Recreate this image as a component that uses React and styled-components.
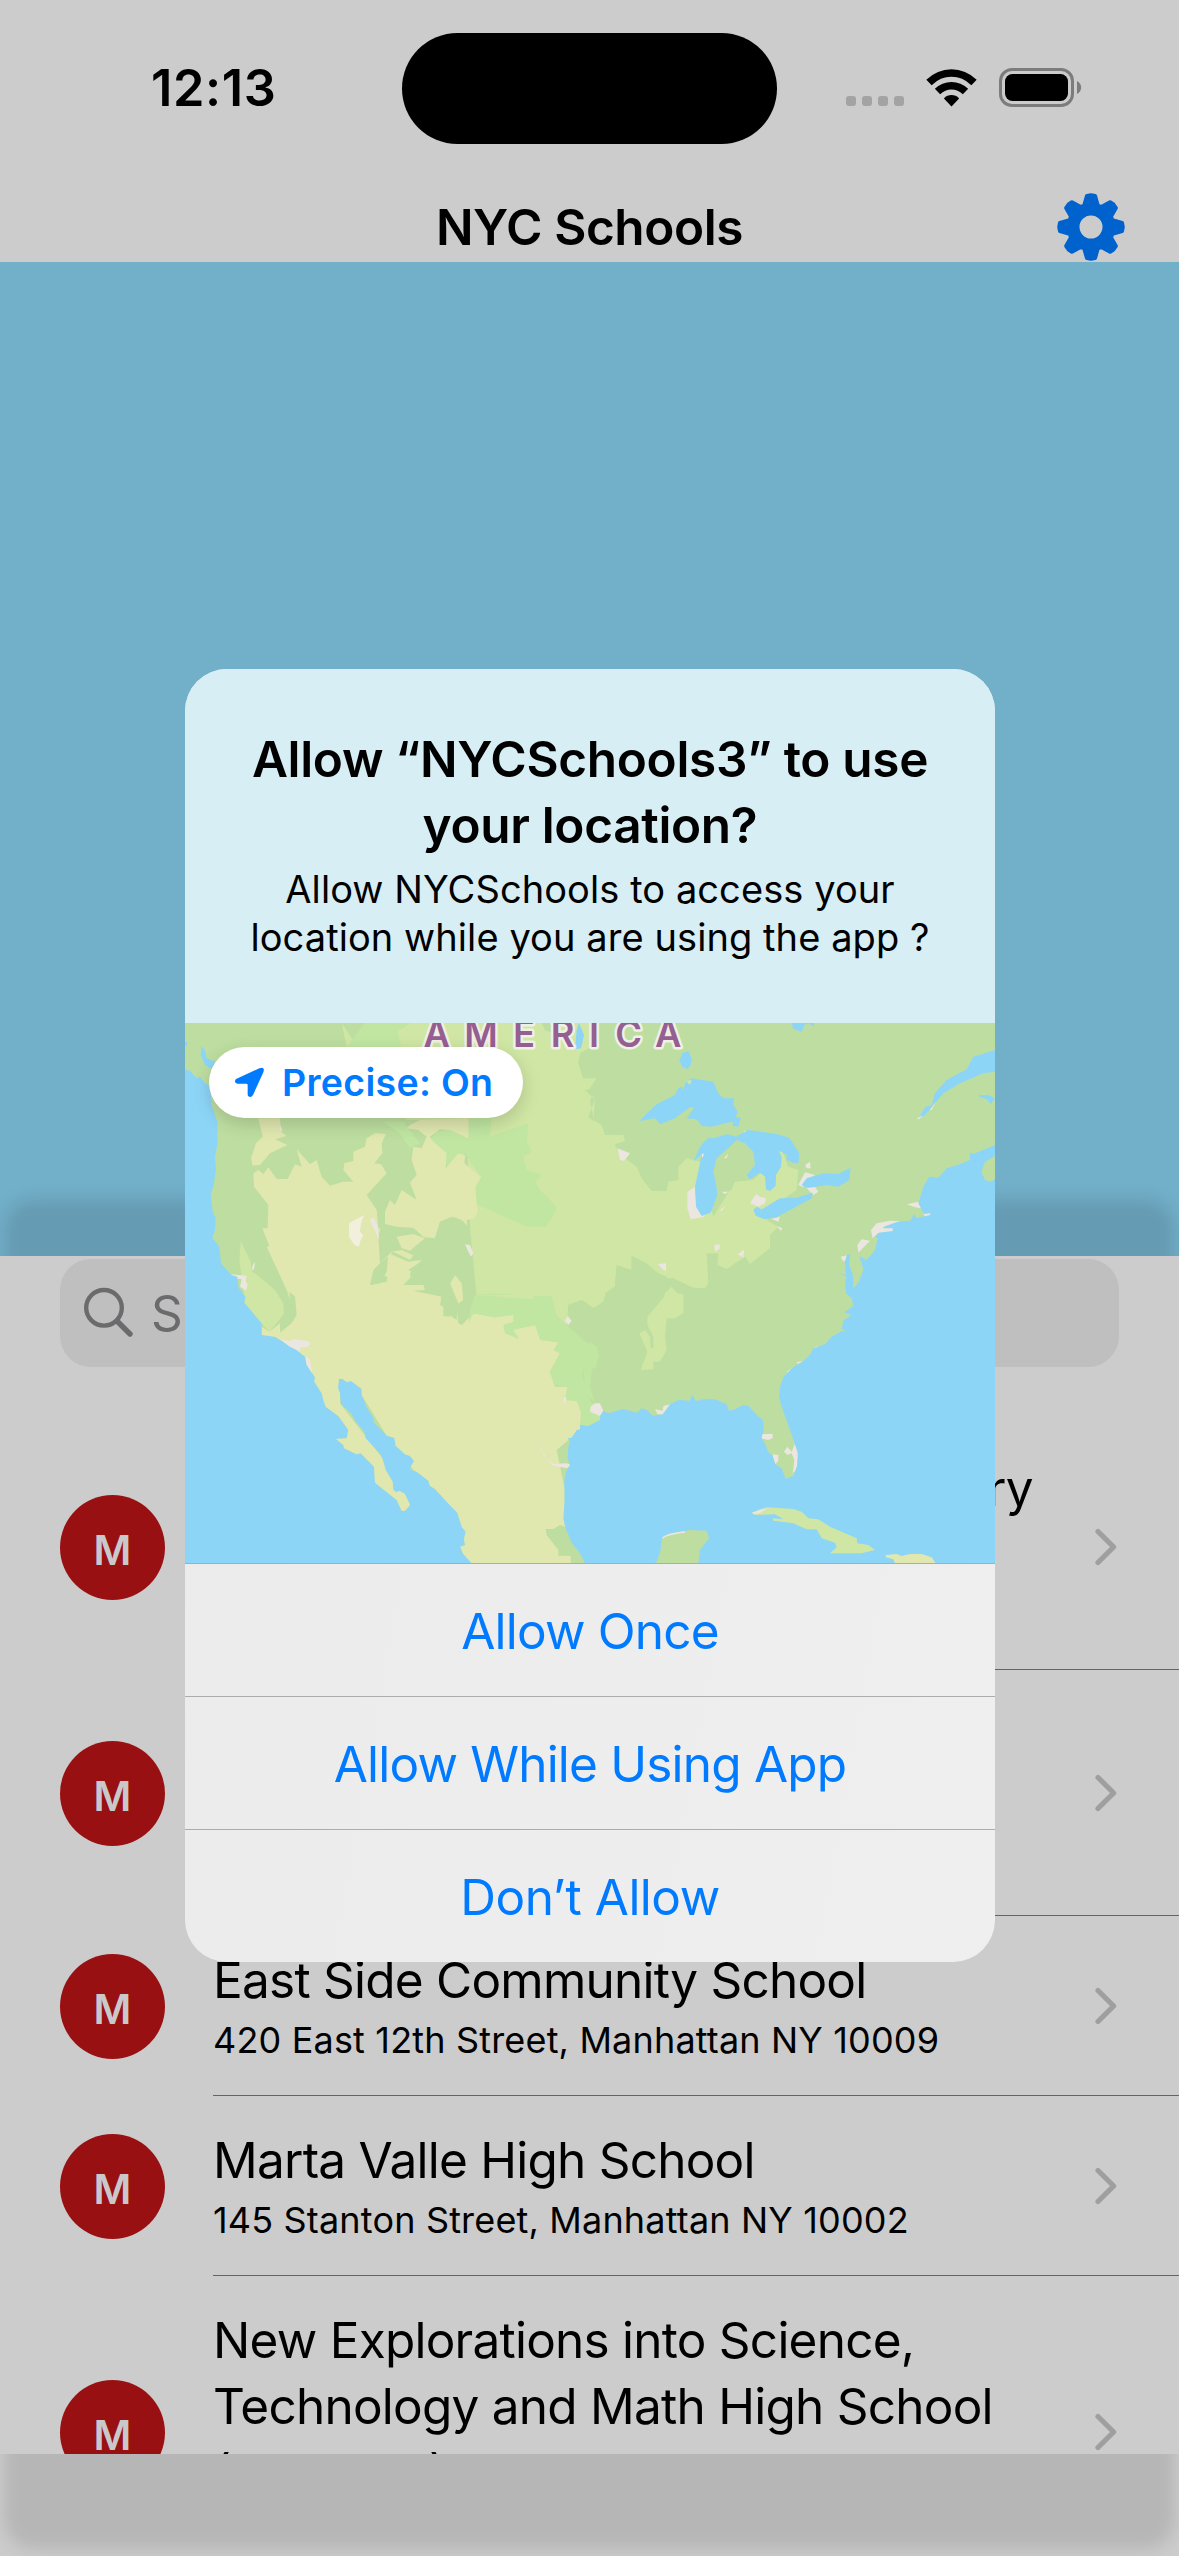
import React from "react";
import styled, { createGlobalStyle } from "styled-components";

const GlobalStyle = createGlobalStyle`
  html, body { margin: 0; padding: 0; background: #ccc; }
  body { font-family: Inter, "Liberation Sans", sans-serif; color: #000; }
  * { box-sizing: border-box; }
  button { font: inherit; border: 0; background: none; padding: 0; margin: 0; }
`;

const Screen = styled.main`
  position: relative;
  width: 1179px;
  height: 2556px;
  overflow: hidden;
  background: #ccc;
  display: flex;
  flex-direction: column;
  isolation: isolate;
`;

const StatusBar = styled.header`
  height: 177px;
  flex: none;
  display: grid;
  grid-template-columns: 402px 375px 402px;
  align-items: start;
  padding-top: 33px;
`;

const Clock = styled.time`
  padding-left: 151px;
  margin-top: 25px;
  font-size: 50.5px;
  line-height: 60px;
  font-weight: 600;
  letter-spacing: 0.6px;
`;

const Island = styled.div`
  height: 111px;
  border-radius: 56px;
  background: #000;
`;

const StatusIcons = styled.div`
  display: flex;
  padding-left: 68px;
  margin-top: 34px;
`;

const NavBar = styled.nav`
  height: 85px;
  flex: none;
  display: grid;
  grid-template-columns: 1fr auto 1fr;
  align-items: start;
`;

const NavTitle = styled.h1`
  grid-column: 2;
  margin: 0;
  padding-top: 20px;
  font-size: 49.5px;
  line-height: 60px;
  font-weight: 600;
  letter-spacing: ${(p) => p.$track}px;
`;

const GearButton = styled.button`
  justify-self: end;
  display: block;
  width: 68px;
  height: 68px;
  margin: 16px 54px 0 0;
  svg { display: block; }
`;

const MapBackdrop = styled.section`
  height: 994px;
  flex: none;
  background: #72afc9;
`;

const Sheet = styled.section`
  position: relative;
  height: 1198px;
  flex: none;

  &::before {
    content: "";
    position: absolute;
    inset: -57px 4px -95px 4px;
    border-radius: 30px;
    background: rgba(0, 0, 0, 0.105);
    filter: blur(8px);
  }
`;

const SheetBody = styled.div`
  position: relative;
  height: 100%;
  overflow: hidden;
  background: #ccc;
  padding-top: 3px;
`;

const SearchField = styled.div`
  margin: 0 60px 57px;
  height: 108px;
  border-radius: 31px;
  background: #bfbfbf;
  display: flex;
  align-items: center;
  padding-left: 22px;
  font-size: 49.5px;
  color: #6b6b6d;
  svg { flex: none; margin-right: 17px; }
`;

const Row = styled.article`
  display: grid;
  grid-template-columns: 105px 1fr;
  column-gap: 48px;
  align-items: stretch;
  padding-left: 60px;
`;

const Avatar = styled.div`
  align-self: center;
  width: 105px;
  height: 105px;
  border-radius: 50%;
  background: #991012;
  color: #c9c9cb;
  font-size: 41px;
  font-weight: 600;
  line-height: 111px;
  text-align: center;
`;

const RowContent = styled.div`
  display: flex;
  align-items: center;
  padding: 33px 62px 32px 0;
  border-bottom: 1px solid #646466;
`;

const RowText = styled.div`
  flex: 1;
  white-space: nowrap;
`;

const School = styled.div`
  height: 66px;
  font-size: 49.5px;
  line-height: 63px;
  letter-spacing: ${(p) => p.$track || 0}px;
`;

const Address = styled.div`
  height: 48px;
  font-size: 36px;
  line-height: 50px;
  letter-spacing: ${(p) => p.$track || 0}px;
`;

const Alert = styled.div`
  position: absolute;
  left: 185px;
  top: 669px;
  width: 810px;
  height: 1293px;
  border-radius: 42px;
  overflow: hidden;
  background: linear-gradient(100deg, #ebebeb, #efefef);
  display: flex;
  flex-direction: column;
`;

const AlertHeader = styled.div`
  height: 354px;
  flex: none;
  background: #d7eef5;
  padding-top: 57px;
  text-align: center;
`;

const AlertTitle = styled.h2`
  margin: 0;
  font-size: 49.5px;
  line-height: 66px;
  font-weight: 600;
`;

const Message = styled.p`
  margin: 7px 0 0;
  font-size: 38px;
  line-height: 48px;
`;

const Line = styled.span`
  display: block;
  white-space: nowrap;
  letter-spacing: ${(p) => p.$track || 0}px;
`;

const MapPreview = styled.div`
  position: relative;
  height: 540px;
  flex: none;
  > svg { display: block; }
`;

const PrecisePill = styled.div`
  position: absolute;
  left: 24px;
  top: 24px;
  width: 314px;
  height: 71px;
  border-radius: 36px;
  background: #fff;
  box-shadow: 0 6px 18px rgba(0, 0, 0, 0.16);
  color: #007aff;
  display: flex;
  align-items: center;
  padding-left: 25px;
  font-size: 37.5px;
  font-weight: 600;
  white-space: nowrap;
  letter-spacing: ${(p) => p.$track}px;
  svg { flex: none; margin-right: 17px; }
`;

const AlertButton = styled.button`
  flex: none;
  height: 133px;
  border-top: 1px solid #acacae;
  color: #007aff;
  font-size: 49.5px;
  line-height: 134px;
  text-align: center;
  letter-spacing: ${(p) => p.$track || 0}px;
`;

function gearPath(cx, cy) {
  const pts = [];
  const add = (deg, r) => {
    const a = (deg * Math.PI) / 180;
    pts.push(`${(cx + r * Math.sin(a)).toFixed(2)} ${(cy - r * Math.cos(a)).toFixed(2)}`);
  };
  for (let i = 0; i < 8; i++) {
    const c = i * 45;
    add(c - 17.5, 22.5);
    add(c - 7.5, 31.3);
    add(c, 31.8);
    add(c + 7.5, 31.3);
    add(c + 17.5, 22.5);
  }
  return `M${pts.join("L")}Z`;
}

const Gear = () => (
  <svg width="68" height="68" viewBox="0 0 68 68">
    <path
      fillRule="evenodd"
      fill="#0062cc"
      stroke="#0062cc"
      strokeWidth="4"
      strokeLinejoin="round"
      d={`${gearPath(34, 34)}M34 20.5a13.5 13.5 0 1 0 0 27a13.5 13.5 0 1 0 0 -27Z`}
    />
  </svg>
);

const StatusGlyphs = () => (
  <svg width="240" height="42" viewBox="845 67 240 42">
    <g fill="#a3a3a3">
      {[846, 862, 878, 894].map((x) => (
        <rect key={x} x={x} y="96" width="10" height="10" rx="3" />
      ))}
    </g>
    <g fill="none" stroke="#000" strokeWidth="7.6">
      <path d="M929 82.5C942 69.8 961 69.8 974 82.5" />
      <path d="M937.5 91.5C945.5 83.8 957.5 83.8 965.5 91.5" />
    </g>
    <path d="M951.5 106.5L943.9 98.4C948 94 955 94 959.1 98.4Z" />
    <rect x="1000.5" y="69.5" width="72" height="36" rx="11.5" fill="none" stroke="#7c7c7c" strokeWidth="3" />
    <rect x="1005" y="74" width="63" height="27" rx="7.5" />
    <path d="M1077 81C1082.5 83.5 1082.5 91.5 1077 94Z" fill="#7c7c7c" />
  </svg>
);

const SearchIcon = () => (
  <svg width="52" height="52" viewBox="82 1287 52 52" fill="none" stroke="#6b6b6d">
    <circle cx="104" cy="1307.8" r="17.8" strokeWidth="4.4" />
    <path d="M117.5 1321.5L130 1334" strokeWidth="5.4" strokeLinecap="round" />
  </svg>
);

const Chevron = () => (
  <svg width="22" height="38" viewBox="0 0 22 38" fill="none" stroke="#9f9fa0" strokeWidth="5.2" strokeLinecap="round" strokeLinejoin="round">
    <path d="M3 3.5L18.6 19L3 34.5" />
  </svg>
);

const LocationArrow = () => (
  <svg width="31" height="31" viewBox="162 172 93 93">
    <path fill="#007aff" d="M168 208L238 176Q256 170 250 188L219 256Q213 265 205 260Q203 258 203 253L203 226Q203 222 199 222L172 222Q160 219 168 208Z" />
  </svg>
);

const land =
  "M15 39L2445 39L2445 405L2380 432L2370 428L2370 450L2340 463L2300 475L2275 503L2247 500L2230 530L2215 580L2235 618L2210 625L2203 613L2190 632L2135 637L2110 655L2085 680L2093 685L2085 720L2060 750L2038 738L2050 778L2037 815L2020 835L2020 800L2008 765L2010 732L2000 735L1995 755L1998 795L1977 790L2000 800L1995 815L1998 850L2015 865L2020 888L1993 907L2013 915L1990 932L1985 957L1998 962L1985 963L1955 980L1935 1003L1900 1015L1890 1035L1870 1053L1835 1075L1810 1102L1800 1130L1797 1160L1805 1190L1827 1252L1837 1280L1853 1328L1852 1365L1840 1398L1817 1406L1805 1375L1786 1363L1777 1335L1765 1327L1757 1305L1744 1283L1751 1265L1750 1232L1730 1215L1705 1187L1690 1185L1665 1198L1647 1202L1640 1183L1605 1168L1570 1168L1548 1173L1537 1155L1530 1172L1495 1170L1470 1183L1448 1213L1418 1217L1400 1200L1385 1195L1370 1208L1330 1197L1285 1210L1270 1203L1260 1218L1260 1230L1225 1248L1200 1245L1200 1258L1190 1260L1175 1283L1163 1285L1170 1295L1165 1310L1163 1345L1170 1365L1160 1380L1153 1410L1153 1480L1150 1525L1155 1550L1175 1598L1200 1630L1215 1660L875 1660L848 1630L841 1610L855 1605L852 1588L857 1565L845 1550L832 1508L800 1475L765 1437L750 1428L745 1412L710 1385L692 1380L692 1370L702 1353L690 1338L675 1333L647 1307L643 1283L620 1277L583 1238L578 1220L560 1192L545 1155L545 1137L513 1113L500 1117L487 1107L477 1107L474 1135L480 1150L483 1183L515 1212L525 1232L553 1265L557 1285L605 1337L617 1380L638 1415L640 1440L650 1447L658 1442L675 1452L690 1485L675 1502L665 1502L650 1470L585 1418L582 1370L542 1330L530 1333L492 1315L490 1305L468 1287L500 1285L505 1260L475 1218L437 1190L430 1170L425 1150L403 1115L405 1102L380 1065L375 1040L350 1020L330 1010L305 992L285 980L245 975L245 940L193 878L197 860L175 832L172 800L155 795L145 785L123 760L118 710L97 683L105 660L107 625L97 600L92 552L100 530L108 480L105 440L113 400L112 335L95 285L90 228L75 220L60 200L50 205L30 183L15 178Z";

const NorthAmerica = () => (
  <svg width="810" height="540" viewBox="15 39 2430 1620">
    <clipPath id="land"><path d={land} /></clipPath>
    <rect x="15" y="39" width="2430" height="1620" fill="#8dd5f7" />
    <path d={land} fill="#bddea0" />
    <g clipPath="url(#land)">
      {/* prairies and midwest */}
      <path fill="#cfe6a4" d="M485 39L500 112L690 112L1030 230L1195 39L1230 39L1235 110L1200 130L1195 160L1210 205L1250 205L1230 235L1245 270L1240 330L1265 345L1275 375L1330 375L1335 393L1305 403L1315 430L1370 470L1385 505L1415 543L1460 543L1465 515L1495 510L1495 470L1520 445L1560 455L1600 620L1640 555L1665 515L1720 510L1745 485L1790 440L1805 420L1825 470L1855 480L1850 540L1760 600L1760 630L1795 650L1770 675L1770 715L1710 762L1695 740L1640 777L1612 765L1615 730L1580 730L1585 820L1575 835L1540 833L1480 805L1440 805L1355 740L1355 780L1310 770L1305 830L1275 850L1240 895L1205 870L1165 885L1160 950L1090 870L890 865L870 650L860 330L680 330Z" />
      <path fill="#cfe6a4" d="M690 39L1195 39L1185 118L1030 240L900 130L665 115L650 65Z" />
      <path fill="#bddea0" d="M1240 235L1245 270L1215 240ZM1230 130L1195 160L1210 205L1240 205ZM1085 39L1110 39L1120 70L1095 60ZM1255 240L1230 270L1242 335L1225 320Z" />
      <path fill="#c0e6a2" d="M555 39L690 39L650 65L665 112L500 112ZM610 335L670 335L720 400L690 415L660 370ZM865 325L935 325L930 380L1045 340L1040 395L1055 425L1030 440L1040 480L1085 495L1065 515L1080 540L1130 590L1125 610L1098 650L1040 650L885 580L890 530L903 500L855 430L830 440L805 475L780 430L745 400L770 365L810 360L865 380Z" />
      {/* western drylands */}
      <path fill="#e0e7af" d="M235 325L300 325L303 365L320 378L285 388L322 405L270 430L240 465L218 467L213 445L228 400L248 380ZM220 490L235 480L250 492L265 472L290 507L323 507L345 463L365 470L350 418L390 463L410 450L425 500L450 527L490 515L520 515L490 480L493 460L520 453L520 425L555 410L560 385L585 370L618 372L605 400L607 430L583 460L603 463L620 490L560 555L590 600L595 655L650 650L700 655L732 682L690 670L650 680L665 720L715 715L690 750L640 725L595 765L570 825L600 820L620 785L625 730L685 755L725 750L690 790L695 820L780 825L785 870L815 920L830 930L835 880L810 820L825 795L845 800L850 860L845 945L880 910L945 922L1020 905L1000 935L970 955L1015 985L990 960L1065 945L1090 990L1135 997L1122 1020L1140 1030L1110 1085L1125 1130L1163 1130L1155 1170L1190 1172L1203 1205L1200 1260L1130 1320L1180 1560L1140 1545L1120 1557L1097 1557L1100 1575L1135 1620L1135 1637L1172 1637L1172 1660L860 1660L780 1470L640 1310L530 1130L480 1105L480 1180L650 1400L700 1500L660 1510L470 1330L420 1180L245 978L245 950L268 965L300 940L300 968L335 940L350 915L345 860L328 845L330 870L320 840L260 710L268 708L247 655L263 655L265 585L222 530ZM690 345L720 330L865 325L865 385L810 360L780 358L750 380L760 395L800 430L797 475L835 430L855 435L853 460L903 500L885 530L890 580L893 605L885 625L860 630L862 650L850 645L815 620L780 635L765 685L735 685L700 653L650 650L615 650L615 605L630 570L645 585L665 540L710 570L690 518L710 495L695 450L700 410L725 415L740 380L715 360L680 355Z" />
      {/* southern rockies */}
      <path fill="#bddea0" d="M605 640L650 650L700 655L732 682L765 685L780 635L805 630L805 672L830 655L820 620L845 630L870 655L855 700L875 740L873 800L888 855L883 895L845 945L835 940L830 885L850 870L845 820L825 795L810 820L825 885L810 920L790 918L790 890L780 885L785 860L700 842L735 840L730 825L670 825L705 790L685 780L730 750L665 720L635 725L595 765L615 780L600 795L622 800L620 815L595 820L570 825L580 780L600 760L595 680Z" />
      <path fill="#e0e7af" d="M650 680L700 672L735 685L710 705L690 722L665 715Z" />
      <path fill="#c0e6a2" d="M885 855L940 850L1060 855L1115 855L1130 920L1160 945L1210 990L1255 1020L1250 1080L1210 1080L1220 1130L1238 1180L1260 1200L1260 1230L1225 1248L1203 1245L1203 1205L1190 1172L1155 1170L1163 1130L1125 1125L1110 1085L1140 1030L1122 1020L1135 997L1080 990L1065 945L1000 960L1018 988L975 970L970 945L1000 935L1000 915L945 922L880 910L865 940L870 900Z" />
      <path fill="#cfe6a4" d="M885 855L1165 850L1165 880L1155 925L1130 920L1115 857L1060 857L1060 867L1010 865Z" />
      <path fill="#bddea0" d="M1275 850L1300 850L1270 880L1240 895L1205 870L1165 885L1162 940L1170 948L1210 990L1255 1020L1258 1050L1245 1075L1208 1080L1207 1100L1220 1130L1222 1150L1235 1180L1280 1180L1300 960Z" />
      <path fill="#c0e6a2" d="M1230 995L1250 1010L1257 1040L1235 1080L1230 1130L1245 1180L1220 1150L1210 1090Z" />
      {/* central valley */}
      <path fill="#cfe6a4" d="M182 693L212 755L215 785L225 790L285 840L310 880L312 910L298 930L268 965L245 940L193 878L190 835L178 750Z" />
      <path fill="#cfe6a4" d="M1470 840L1510 870L1510 910L1485 925L1460 925L1455 980L1460 1020L1440 1055L1420 1055L1420 1078L1382 1080L1402 1025L1378 970L1395 960L1410 980L1412 1015L1420 1015L1420 980L1402 945L1402 920Z" />
      <path fill="#cfe6a4" d="M1240 840L1300 840L1275 855L1270 875L1240 895Z" />
      <path fill="#bddea0" d="M1310 765L1355 780L1355 737L1400 760L1435 790L1460 800L1470 825L1450 860L1400 900L1280 890L1275 850L1305 830Z" />
      <path fill="#cfe6a4" d="M1400 722L1440 755L1440 770L1390 750ZM1475 830L1492 850L1510 852L1510 890L1450 870L1455 850Z" />
      <path fill="#bddea0" d="M1655 405L1670 390L1700 400L1725 425L1720 470L1700 495L1700 512L1665 510L1655 540L1635 548L1633 568L1610 550L1600 500L1610 445Z" />
      {/* salt flats and cities */}
      <path fill="#f2efdd" d="M515 635L552 615L543 640L540 665L550 675L540 695L537 710L523 705L507 680L507 640Z" />
      <path fill="#ebe6df" d="M570 630L580 622L592 645L598 690L580 655ZM855 703L870 705L880 730L873 740L865 725ZM153 793L200 797L197 812L203 825L198 842L180 830L185 808L160 805ZM218 765L225 757L223 775L215 783ZM301 345L308 365L300 360ZM300 988L330 993L340 987L385 993L392 1003L380 1011L362 1012L358 1025L330 1010ZM378 1038L390 1050L397 1090L388 1080L378 1060ZM1155 932L1163 917L1175 933L1165 945ZM1260 1180L1270 1203L1260 1218L1230 1205L1232 1190L1245 1180ZM1085 1327L1095 1335L1095 1345L1120 1362L1160 1360L1172 1365L1163 1375L1120 1367L1095 1345L1072 1290ZM1150 1165L1160 1160L1155 1185ZM1425 1197L1448 1202L1450 1188L1472 1183L1450 1215L1432 1212ZM1744 1272L1778 1272L1778 1285L1765 1290L1745 1285ZM1777 1333L1795 1335L1795 1352L1786 1363ZM1812 1325L1822 1310L1835 1325L1845 1300L1855 1330L1850 1380L1838 1390L1843 1350L1835 1330L1822 1335ZM1312 415L1350 430L1332 453L1320 450ZM1522 545L1545 530L1547 565L1560 612L1575 615L1570 622L1532 628L1522 595ZM1710 580L1728 552L1740 560L1758 565L1755 580L1735 590ZM1855 525L1875 487L1905 495L1880 510L1870 532ZM1880 535L1905 530L1915 545L1900 555ZM1773 627L1800 620L1795 635ZM1790 648L1807 655L1803 663ZM1603 705L1618 703L1620 715L1605 725ZM1673 733L1693 718L1690 743ZM1433 762L1458 760L1458 783L1450 780ZM2032 705L2045 688L2070 692L2035 728ZM1985 740L2003 735L1995 755ZM1875 465L1890 455L1892 475L1880 475ZM1690 363L1710 362L1700 378ZM1632 445L1645 430L1640 445ZM1625 545L1645 545L1635 553ZM1620 600L1638 587L1625 603ZM2180 583L2215 575L2225 595L2205 592ZM1900 1015L1915 1007L1905 1022ZM1820 1085L1840 1072L1828 1090ZM1850 1057L1870 1052L1855 1062Z" />
    </g>
    <path fill="#ebe6df" d="M2073 660L2090 640L2130 632L2160 633L2110 650L2110 655L2138 655L2138 663L2095 668L2078 685ZM2230 612L2252 610L2250 615L2235 619Z" />
    {/* lakes, rivers and remaining islands */}
    <g transform="translate(1230 0)">
      <g fill="#8dd5f7">
        <path d="M148 333L200 283L255 255L265 235L275 230L278 240L290 212L305 205L370 215L385 250L400 265L432 265L430 285L443 305L437 320L452 325L445 350L427 348L430 335L405 340L365 350L335 348L320 328L290 325L313 293L300 292L255 325L210 343L195 325Z" />
        <path d="M310 455L330 410L350 388L360 383L370 385L410 373L440 380L440 390L425 405L380 445L370 485L378 520L382 555L362 608L335 618L318 590L315 530L330 460L335 432Z" />
        <path d="M440 378L475 360L560 372L598 383L628 430L625 460L610 458L590 450L590 435L565 420L575 440L573 470L558 495L557 527L540 543L528 538L525 500L510 488L480 508L470 495L495 465L490 425L465 400L440 390Z" />
        <path d="M490 600L500 590L515 598L570 565L620 563L668 548L665 565L600 600L560 622L525 628L497 617Z" />
        <path d="M635 525L650 505L700 490L745 492L782 473L778 510L745 530L710 525L670 532L645 532Z" />
        <path d="M988 322L1005 292L1025 285L1035 250L1070 210L1130 178L1150 140L1215 120L1215 185L1180 190L1110 220L1060 250L1035 280L1000 320Z" />
        <path d="M277 128L295 123L305 145L302 165L293 178L277 170L268 152Z" />
        <path d="M605 39L672 39L672 50L655 39L643 45L635 65L610 57ZM1167 255L1195 255L1215 265L1203 282L1190 268L1167 260Z" />
      </g>
      <path fill="#bddea0" d="M1215 438L1185 455L1174 485L1185 510L1205 515L1215 505Z" />
      <path fill="#ebe6df" d="M334 433L342 430L338 445ZM980 326L1000 315L988 328ZM1020 300L1037 275L1025 300ZM752 740L768 737L760 755Z" />
      <path fill="#cfe6a4" d="M288 212L305 210L300 225Z" />
      <path fill="#cfe6a4" d="M486 1508L510 1498L535 1492L610 1497L635 1505L655 1525L685 1528L720 1550L800 1585L802 1600L835 1605L855 1620L815 1630L720 1630L740 1612L735 1598L695 1585L680 1558L650 1558L610 1540L550 1532L548 1525L580 1528L555 1513L495 1515Z" />
      <path fill="#ebe6df" d="M486 1508L535 1492L510 1510L490 1512Z" />
      <path fill="#e0e7af" d="M887 1635L920 1632L935 1638L960 1632L995 1632L1025 1642L1037 1660L915 1660L910 1648L887 1642Z" />
      <path fill="#bddea0" d="M198 1660L212 1620L215 1588L235 1572L300 1560L350 1562L357 1585L330 1620L325 1660Z" />
      <path fill="none" stroke="#ebe6df" strokeWidth="4" d="M218 1585Q225 1573 285 1566" />
    </g>
    <path fill="#8dd5f7" d="M65 108L75 120L80 145L105 155L100 180L75 165L62 135ZM15 95L24 97L20 108L15 108ZM1185 118L1190 60L1197 39L1212 75L1203 115Z" />
    <g fontFamily="Inter, sans-serif" fontWeight="600" fontSize="109" textAnchor="middle" fill="#965f91" stroke="#f0f1e6" strokeWidth="15" strokeLinejoin="round" paintOrder="stroke">
      <text y="110" x="770 903 1032 1148 1242 1346 1465">AMERICA</text>
    </g>
  </svg>
);

const schools = [
  { lines: ["Orchard Collegiate Academy (Henry", "Street School)"], address: "220 Henry Street, Manhattan NY 10002" },
  { lines: ["University Neighborhood High", "School"], address: "200 Monroe Street, Manhattan NY 10002" },
  { lines: ["East Side Community School"], address: "420 East 12th Street, Manhattan NY 10009" },
  { lines: ["Marta Valle High School"], address: "145 Stanton Street, Manhattan NY 10002" },
  { lines: ["New Explorations into Science,", "Technology and Math High School", "(NEST+m)"], address: "111 Columbia Street, Manhattan NY 10002" },
];

const SchoolRow = ({ lines, address }) => (
  <Row>
    <Avatar>M</Avatar>
    <RowContent>
      <RowText>
        {lines.map((l) => <School key={l} $track={-0.76}>{l}</School>)}
        <Address $track={0.17}>{address}</Address>
      </RowText>
      <Chevron />
    </RowContent>
  </Row>
);

export default function App() {
  return (
    <>
      <GlobalStyle />
      <Screen>
        <StatusBar>
          <Clock>12:13</Clock>
          <Island />
          <StatusIcons><StatusGlyphs /></StatusIcons>
        </StatusBar>
        <NavBar>
          <NavTitle $track={-0.4}>NYC Schools</NavTitle>
          <GearButton aria-label="Settings"><Gear /></GearButton>
        </NavBar>
        <MapBackdrop />
        <Sheet>
          <SheetBody>
            <SearchField><SearchIcon />Search</SearchField>
            {schools.map((s) => <SchoolRow key={s.address} {...s} />)}
          </SheetBody>
        </Sheet>
        <Alert role="alertdialog">
          <AlertHeader>
            <AlertTitle>
              <Line $track={-0.33}>Allow “NYCSchools3” to use</Line>
              <Line $track={-0.33}>your location?</Line>
            </AlertTitle>
            <Message>
              <Line $track={0.08}>Allow NYCSchools to access your</Line>
              <Line $track={0.08}>location while you are using the app ?</Line>
            </Message>
          </AlertHeader>
          <MapPreview>
            <NorthAmerica />
            <PrecisePill $track={0.3}><LocationArrow />Precise: On</PrecisePill>
          </MapPreview>
          <AlertButton $track={-0.8}>Allow Once</AlertButton>
          <AlertButton $track={-0.8}>Allow While Using App</AlertButton>
          <AlertButton $track={-0.5}>Don’t Allow</AlertButton>
        </Alert>
      </Screen>
    </>
  );
}
